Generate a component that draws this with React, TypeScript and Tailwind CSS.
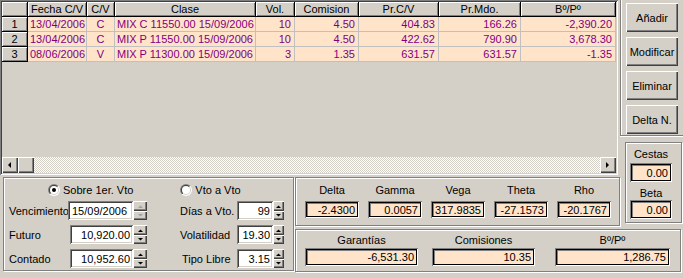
import React from 'react';

const sunken =
  'shadow-[inset_1px_1px_0_#808080,inset_-1px_-1px_0_#ffffff,inset_2px_2px_0_#404040,inset_-2px_-2px_0_#d4d0c8]';
const raised =
  'shadow-[inset_1px_1px_0_#ffffff,inset_-1px_-1px_0_#404040,inset_-2px_-2px_0_#808080]';
const etched = 'border border-[#808080] shadow-[inset_1px_1px_0_#ffffff,1px_1px_0_#ffffff]';
const field =
  'bg-[#ffe4ca] shadow-[inset_1px_1px_0_#808080,inset_-1px_-1px_0_#ffffff,inset_2px_2px_0_#000000,inset_-2px_-2px_0_#000000,inset_3px_3px_0_#808080]';

const cols = [
  { w: 'w-[26px]', label: '', align: 'justify-center' },
  { w: 'w-[59px]', label: 'Fecha C/V', align: 'justify-start pl-[2px]' },
  { w: 'w-[28px]', label: 'C/V', align: 'justify-center' },
  { w: 'w-[141px]', label: 'Clase', align: 'justify-start pl-[2px]' },
  { w: 'w-[39px]', label: 'Vol.', align: 'justify-end pr-[3px]' },
  { w: 'w-[64px]', label: 'Comision', align: 'justify-end pr-[3px]' },
  { w: 'w-[80px]', label: 'Pr.C/V', align: 'justify-end pr-[3px]' },
  { w: 'w-[82px]', label: 'Pr.Mdo.', align: 'justify-end pr-[3px]' },
  { w: 'w-[95px]', label: 'Bº/Pº', align: 'justify-end pr-[3px]' },
];

const rows = [
  ['1', '13/04/2006', 'C', 'MIX C 11550.00 15/09/2006', '10', '4.50', '404.83', '166.26', '-2,390.20'],
  ['2', '13/04/2006', 'C', 'MIX P 11550.00 15/09/2006', '10', '4.50', '422.62', '790.90', '3,678.30'],
  ['3', '08/06/2006', 'V', 'MIX P 11300.00 15/09/2006', '3', '1.35', '631.57', '631.57', '-1.35'],
];

const Arrow = ({ dir, color = '#000000' }: { dir: 'up' | 'down' | 'left' | 'right'; color?: string }) => {
  const pts = {
    up: '0,3 5,3 2.5,0.5',
    down: '0,0 5,0 2.5,2.5',
    left: '3,0 3,6 0,3',
    right: '0,0 0,6 3,3',
  }[dir];
  const horiz = dir === 'left' || dir === 'right';
  return (
    <svg width={horiz ? 4 : 5} height={horiz ? 7 : 3} viewBox={horiz ? '0 0 4 7' : '0 0 5 3'}>
      <polygon points={pts} fill={color} />
    </svg>
  );
};

const Spin = ({ w, disabled }: { w: string; disabled?: boolean }) => (
  <div className={`flex flex-col ${w} h-[19px]`}>
    <div className={`h-[10px] bg-[#d4d0c8] flex items-center justify-center ${raised}`}>
      <Arrow dir="up" color={disabled ? '#a0a0a0' : '#000000'} />
    </div>
    <div className={`h-[9px] bg-[#d4d0c8] flex items-center justify-center ${raised}`}>
      <Arrow dir="down" color={disabled ? '#a0a0a0' : '#000000'} />
    </div>
  </div>
);

const Radio = ({ checked, label }: { checked?: boolean; label: string }) => (
  <div className="flex items-center gap-[3px]">
    <svg width="12" height="12" viewBox="0 0 12 12">
      <defs>
        <linearGradient id={`ro${label.length}`} x1="0" y1="0" x2="1" y2="1">
          <stop offset="0.5" stopColor="#808080" />
          <stop offset="0.5" stopColor="#ffffff" />
        </linearGradient>
        <linearGradient id={`ri${label.length}`} x1="0" y1="0" x2="1" y2="1">
          <stop offset="0.5" stopColor="#404040" />
          <stop offset="0.5" stopColor="#d4d0c8" />
        </linearGradient>
      </defs>
      <circle cx="6" cy="6" r="6" fill={`url(#ro${label.length})`} />
      <circle cx="6" cy="6" r="5" fill={`url(#ri${label.length})`} />
      <circle cx="6" cy="6" r="4" fill="#ffffff" />
      {checked && <circle cx="6" cy="6" r="2" fill="#000000" />}
    </svg>
    <span>{label}</span>
  </div>
);

const Input = ({ w, value, left }: { w: string; value: string; left?: boolean }) => (
  <div
    className={`${w} h-[19px] bg-white flex items-center ${left ? 'justify-start pl-[4px]' : 'justify-end pr-[3px]'} ${sunken}`}
  >
    {value}
  </div>
);

const Readout = ({ w, h, value }: { w: string; h: string; value: string }) => (
  <div className={`${w} ${h} flex items-center justify-end pr-[4px] ${field}`}>{value}</div>
);

const Button = ({ label }: { label: string }) => (
  <div className={`w-[52px] h-[29px] bg-[#d4d0c8] flex items-center justify-center ${raised}`}>{label}</div>
);

export default function App() {
  return (
    <div className="w-[683px] h-[278px] bg-[#d4d0c8] overflow-hidden font-['Liberation_Sans',Arial,sans-serif] text-[11px] leading-[14px] text-black grid grid-cols-[295px_325px_63px] grid-rows-[176px_52px_50px]">
      {/* grid */}
      <div className="col-span-2">
        <div className={`w-[618px] h-[175px] p-[2px] flex flex-col ${sunken}`}>
          <div className="flex-1">
            <div className="flex h-[15px]">
              {cols.map((c, i) => (
                <div
                  key={i}
                  className={`${c.w} h-[15px] flex items-center justify-center border-r border-b border-[#000000] bg-[#d4d0c8] shadow-[inset_1px_1px_0_#ffffff,inset_-1px_-1px_0_#808080]`}
                >
                  {c.label}
                </div>
              ))}
            </div>
            {rows.map((r, ri) => (
              <div key={ri} className="flex h-[15px]">
                {r.map((v, ci) =>
                  ci === 0 ? (
                    <div
                      key={ci}
                      className={`${cols[ci].w} h-[15px] flex items-center justify-center border-r border-b border-[#000000] bg-[#d4d0c8] shadow-[inset_1px_1px_0_#ffffff,inset_-1px_-1px_0_#808080]`}
                    >
                      {v}
                    </div>
                  ) : (
                    <div
                      key={ci}
                      className={`${cols[ci].w} h-[15px] flex items-center overflow-hidden whitespace-nowrap border-r border-b border-[#c0c0c0] bg-[#ffe4ca] text-[#800080] ${cols[ci].align}`}
                    >
                      {v}
                    </div>
                  )
                )}
              </div>
            ))}
          </div>
          <div className="flex h-[16px]">
            <div className={`w-[16px] h-[16px] bg-[#d4d0c8] flex items-center justify-center ${raised}`}>
              <Arrow dir="left" />
            </div>
            <div className={`w-[16px] h-[16px] bg-[#d4d0c8] ${raised}`} />
            <div className="flex-1 bg-[repeating-conic-gradient(#d4d0c8_0_25%,#ffffff_0_50%)] bg-[length:2px_2px]" />
            <div className={`w-[16px] h-[16px] bg-[#d4d0c8] flex items-center justify-center ${raised}`}>
              <Arrow dir="right" />
            </div>
          </div>
        </div>
      </div>

      {/* right column */}
      <div className="row-span-2 flex flex-col">
        <div className="h-[136px] border-l border-b border-[#808080] shadow-[inset_1px_0_0_#ffffff,0_1px_0_#ffffff] flex flex-col gap-[5px] pt-[3px] pl-[5px]">
          <Button label="Añadir" />
          <Button label="Modificar" />
          <Button label="Eliminar" />
          <Button label="Delta N." />
        </div>
        <div className={`ml-[5px] mt-[6px] w-[57px] h-[81px] ${etched} flex flex-col items-start pl-[4px] pt-[4px]`}>
          <div className="w-[42px] text-center">Cestas</div>
          <div className="mt-[2px]">
            <Readout w="w-[42px]" h="h-[19px]" value="0.00" />
          </div>
          <div className="w-[42px] text-center mt-[4px]">Beta</div>
          <div className="mt-[0px]">
            <Readout w="w-[42px]" h="h-[19px]" value="0.00" />
          </div>
        </div>
      </div>

      {/* left params panel */}
      <div className="row-span-2">
        <div className={`ml-[3px] mt-[1px] w-[291px] h-[94px] ${etched} pl-[5px]`}>
          <div className="flex h-[18px] mt-[3px] items-center">
            <div className="ml-[39px]">
              <Radio checked label="Sobre 1er. Vto" />
            </div>
            <div className="ml-[47px]">
              <Radio label="Vto a Vto" />
            </div>
          </div>
          <div className="flex flex-col gap-[5px] mt-[2px]">
            <div className="flex items-center h-[19px]">
              <div className="w-[59px]">Vencimiento</div>
              <Input w="w-[65px]" value="15/09/2006" left />
              <Spin w="w-[14px]" disabled />
              <div className="w-[57px] ml-[33px]">Días a Vto.</div>
              <Input w="w-[36px]" value="99" />
              <Spin w="w-[11px]" />
            </div>
            <div className="flex items-center h-[19px]">
              <div className="w-[61px]">Futuro</div>
              <Input w="w-[63px]" value="10,920.00" />
              <Spin w="w-[14px]" />
              <div className="w-[57px] ml-[33px]">Volatilidad</div>
              <Input w="w-[36px]" value="19.30" />
              <Spin w="w-[11px]" />
            </div>
            <div className="flex items-center h-[19px]">
              <div className="w-[61px]">Contado</div>
              <Input w="w-[63px]" value="10,952.60" />
              <Spin w="w-[14px]" />
              <div className="w-[57px] ml-[33px] pl-[2px]">Tipo Libre</div>
              <Input w="w-[36px]" value="3.15" />
              <Spin w="w-[11px]" />
            </div>
          </div>
        </div>
      </div>

      {/* greeks */}
      <div>
        <div className={`mt-[1px] w-[325px] h-[49px] ${etched} flex gap-[9px] pl-[9px] pt-[5px]`}>
          {[
            ['Delta', '-2.4300'],
            ['Gamma', '0.0057'],
            ['Vega', '317.9835'],
            ['Theta', '-27.1573'],
            ['Rho', '-20.1767'],
          ].map(([l, v]) => (
            <div key={l} className="flex flex-col items-center w-[54px]">
              <div className="h-[14px]">{l}</div>
              <div className="mt-[4px]">
                <Readout w="w-[54px]" h="h-[17px]" value={v} />
              </div>
            </div>
          ))}
        </div>
      </div>

      {/* results */}
      <div className="col-span-2">
        <div className={`mt-[1px] w-[386px] h-[43px] ${etched} flex pl-[9px] pt-[3px]`}>
          <div className="flex flex-col items-center w-[113px]">
            <div className="h-[14px]">Garantías</div>
            <div className="mt-[1px]">
              <Readout w="w-[113px]" h="h-[18px]" value="-6,531.30" />
            </div>
          </div>
          <div className="flex flex-col items-center w-[103px] ml-[14px]">
            <div className="h-[14px]">Comisiones</div>
            <div className="mt-[1px]">
              <Readout w="w-[103px]" h="h-[18px]" value="10.35" />
            </div>
          </div>
          <div className="flex flex-col items-center w-[115px] ml-[20px]">
            <div className="h-[14px]">Bº/Pº</div>
            <div className="mt-[1px]">
              <Readout w="w-[115px]" h="h-[18px]" value="1,286.75" />
            </div>
          </div>
        </div>
      </div>
    </div>
  );
}
